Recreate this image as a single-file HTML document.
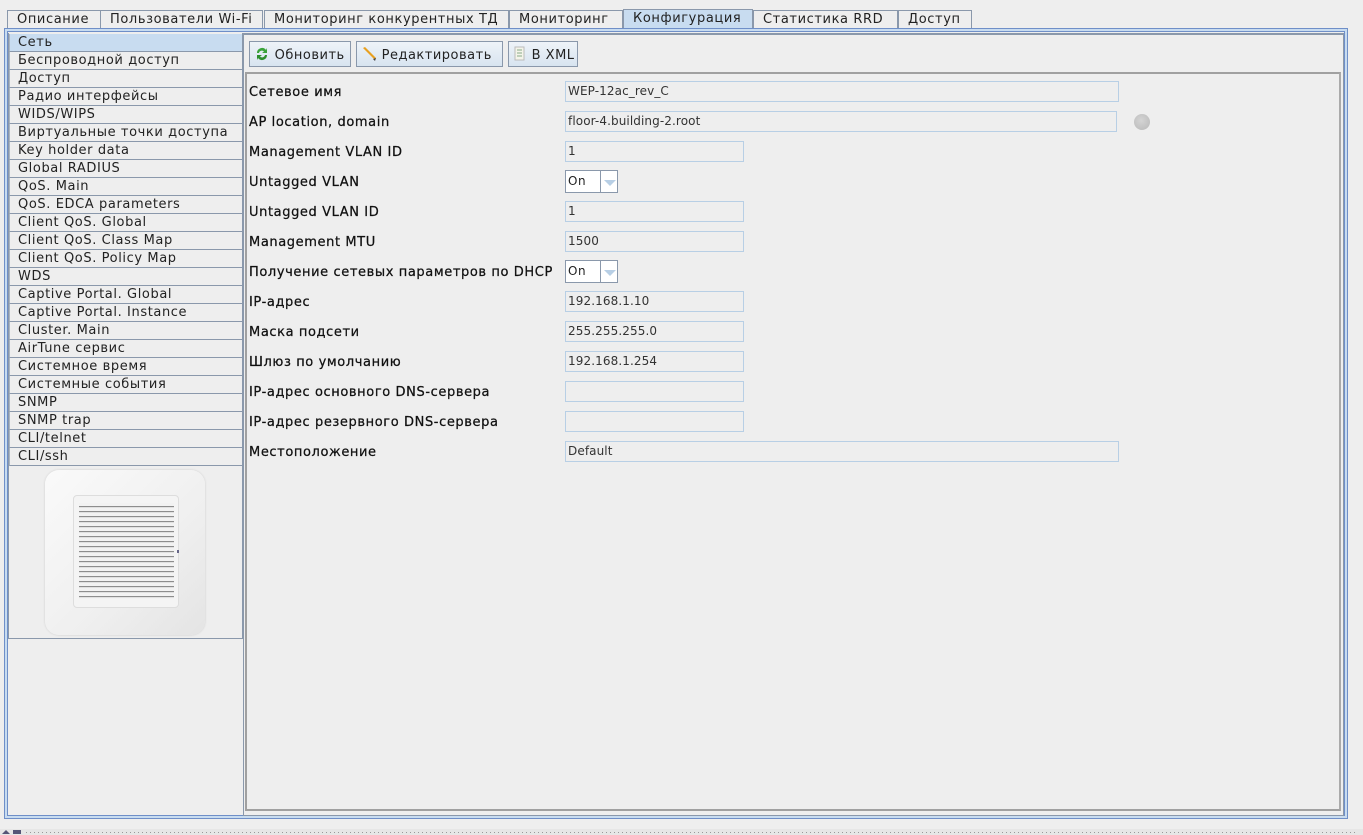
<!DOCTYPE html>
<html><head><meta charset="utf-8"><style>
*{box-sizing:border-box;margin:0;padding:0}
body{width:1363px;height:835px;background:#eeeeee;font-family:"DejaVu Sans","Liberation Sans",sans-serif;font-size:13px;color:#222;position:relative;overflow:hidden;letter-spacing:0.6px}
.abs{position:absolute}
.tab{position:absolute;top:10px;height:19px;border:1px solid #8a98ab;border-bottom:none;background:#eeeeee;padding:1px 0 0 9px;font-size:13px;color:#222;white-space:nowrap}
.tab.sel{background:#c8dcf0;top:9px;height:20px}
.li{position:absolute;left:9px;width:233px;height:18px;border-bottom:1px solid #8a98ab;border-left:1px solid #a8b4c4;padding:1px 0 0 8px;font-size:13px;white-space:nowrap}
.lbl{position:absolute;left:249px;font-size:13px;color:#111;letter-spacing:0.6px;-webkit-text-stroke:0.25px #111}
.fld{position:absolute;left:565px;height:21px;border:1px solid #b8cfe5;background:#eeeeee;font-size:12px;color:#333;padding:2px 0 0 2px;letter-spacing:0.1px}
.cmb{position:absolute;left:565px;width:53px;height:23px;border:1px solid #8a98ab;background:#fff}
.cmb span{position:absolute;left:2px;top:3px;font-size:12px}
.cmb i{position:absolute;left:34px;top:0;width:1px;height:21px;background:#8a98ab}
.cmb b{position:absolute;left:38px;top:9px;width:0;height:0;border-left:6px solid transparent;border-right:6px solid transparent;border-top:6px solid #b8cfe5}
.btn{position:absolute;top:41px;height:26px;border:1px solid #8a98ab;background:linear-gradient(#eef3f8,#d8e4f0);font-size:13px;padding:4px 0 0 4px;white-space:nowrap;letter-spacing:0.5px}
</style></head><body>
<div class="tab" style="left:7px;width:120px">Описание</div>
<div class="tab" style="left:100px;width:163px;border-left:1px solid #8a98ab">Пользователи Wi-Fi</div>
<div class="tab" style="left:264px;width:245px">Мониторинг конкурентных ТД</div>
<div class="tab" style="left:509px;width:114px">Мониторинг</div>
<div class="tab sel" style="left:623px;width:130px">Конфигурация</div>
<div class="tab" style="left:753px;width:145px">Статистика RRD</div>
<div class="tab" style="left:898px;width:74px">Доступ</div>
<div class="abs" style="left:4px;top:28px;width:1344px;height:791px;border:1px solid #6f8fc8;background:#c8dcf0"></div>
<div class="abs" style="left:7px;top:31px;width:1338px;height:785px;border:1px solid #6f8fc8;background:#eeeeee"></div>
<div class="abs" style="left:8px;top:33px;width:235px;height:606px;border:1px solid #8a98ab;border-top:none;background:#eeeeee"></div>
<div class="li" style="top:34px;background:#c8dcf0">Сеть</div>
<div class="li" style="top:52px">Беспроводной доступ</div>
<div class="li" style="top:70px">Доступ</div>
<div class="li" style="top:88px">Радио интерфейсы</div>
<div class="li" style="top:106px">WIDS/WIPS</div>
<div class="li" style="top:124px">Виртуальные точки доступа</div>
<div class="li" style="top:142px">Key holder data</div>
<div class="li" style="top:160px">Global RADIUS</div>
<div class="li" style="top:178px">QoS. Main</div>
<div class="li" style="top:196px">QoS. EDCA parameters</div>
<div class="li" style="top:214px">Client QoS. Global</div>
<div class="li" style="top:232px">Client QoS. Class Map</div>
<div class="li" style="top:250px">Client QoS. Policy Map</div>
<div class="li" style="top:268px">WDS</div>
<div class="li" style="top:286px">Captive Portal. Global</div>
<div class="li" style="top:304px">Captive Portal. Instance</div>
<div class="li" style="top:322px">Cluster. Main</div>
<div class="li" style="top:340px">AirTune сервис</div>
<div class="li" style="top:358px">Системное время</div>
<div class="li" style="top:376px">Системные события</div>
<div class="li" style="top:394px">SNMP</div>
<div class="li" style="top:412px">SNMP trap</div>
<div class="li" style="top:430px">CLI/telnet</div>
<div class="li" style="top:448px">CLI/ssh</div>
<div class="abs" style="left:45px;top:470px;width:160px;height:165px;border-radius:14px;background:linear-gradient(135deg,#fafafa,#efefef 60%,#e4e4e4);box-shadow:0 0 2px #ccc"></div>
<div class="abs" style="left:73px;top:495px;width:106px;height:113px;border-radius:4px;border:1px solid #ddd;background:#f4f4f4"></div>
<div class="abs" style="left:79px;top:503px;width:95px;height:96px;background:repeating-linear-gradient(#f2f2f2 0 3px,#8d8d8d 3px 4px,#e0e0e0 4px 5px)"></div>
<div class="abs" style="left:177px;top:550px;width:2px;height:3px;background:#668"></div>
<div class="abs" style="left:243px;top:33px;width:1101px;height:783px;border:1px solid #8a98ab;border-top:2px solid #8a98ab;background:#eeeeee"></div>
<div class="btn" style="left:249px;width:102px"><svg width="16" height="16" viewBox="0 0 16 16" style="vertical-align:-3px"><path d="M3 7a5 5 0 0 1 9-3l1-2v5h-5l2-1.5A3 3 0 0 0 5 7z" fill="#3aa33a"/><path d="M13 9a5 5 0 0 1-9 3l-1 2V9h5l-2 1.5A3 3 0 0 0 11 9z" fill="#2e8f2e"/></svg> Обновить</div>
<div class="btn" style="left:356px;width:147px"><svg width="16" height="16" viewBox="0 0 16 16" style="vertical-align:-3px"><path d="M2 2l2-1 11 11-1 2z" fill="#e8a020"/><path d="M12 13l2 2 1-3z" fill="#444"/></svg> Редактировать</div>
<div class="btn" style="left:508px;width:70px"><svg width="14" height="16" viewBox="0 0 14 16" style="vertical-align:-3px"><rect x="2" y="1" width="9" height="13" fill="#f4f4ea" stroke="#bbb"/><path d="M4 4h5M4 7h5M4 10h5" stroke="#8a8"/></svg> В XML</div>
<div class="abs" style="left:245px;top:72px;width:1096px;height:739px;border:2px solid #a0a0a0;border-right-color:#aaa;background:#eeeeee"></div>
<div class="lbl" style="top:85px">Сетевое имя</div><div class="fld" style="top:81px;width:554px">WEP-12ac_rev_C</div>
<div class="lbl" style="top:115px">AP location, domain</div><div class="fld" style="top:111px;width:552px">floor-4.building-2.root</div>
<div class="abs" style="left:1134px;top:114px;width:16px;height:16px;border-radius:50%;background:radial-gradient(circle at 45% 40%,#d4d4d4,#b8b8b8)"></div>
<div class="lbl" style="top:145px">Management VLAN ID</div><div class="fld" style="top:141px;width:179px">1</div>
<div class="lbl" style="top:175px">Untagged VLAN</div><div class="cmb" style="top:170px"><span>On</span><i></i><b></b></div>
<div class="lbl" style="top:205px">Untagged VLAN ID</div><div class="fld" style="top:201px;width:179px">1</div>
<div class="lbl" style="top:235px">Management MTU</div><div class="fld" style="top:231px;width:179px">1500</div>
<div class="lbl" style="top:265px">Получение сетевых параметров по DHCP</div><div class="cmb" style="top:260px"><span>On</span><i></i><b></b></div>
<div class="lbl" style="top:295px">IP-адрес</div><div class="fld" style="top:291px;width:179px">192.168.1.10</div>
<div class="lbl" style="top:325px">Маска подсети</div><div class="fld" style="top:321px;width:179px">255.255.255.0</div>
<div class="lbl" style="top:355px">Шлюз по умолчанию</div><div class="fld" style="top:351px;width:179px">192.168.1.254</div>
<div class="lbl" style="top:385px">IP-адрес основного DNS-сервера</div><div class="fld" style="top:381px;width:179px"></div>
<div class="lbl" style="top:415px">IP-адрес резервного DNS-сервера</div><div class="fld" style="top:411px;width:179px"></div>
<div class="lbl" style="top:445px">Местоположение</div><div class="fld" style="top:441px;width:554px">Default</div>
<div class="abs" style="left:0;top:829px;width:1363px;height:6px;background:#e6e6e6"></div>
<div class="abs" style="left:26px;top:832px;width:1330px;height:1px;background:repeating-linear-gradient(90deg,#999 0 1px,transparent 1px 4px)"></div>
<div class="abs" style="left:2px;top:830px;width:0;height:0;border-left:4px solid transparent;border-right:4px solid transparent;border-bottom:4px solid #557"></div>
<div class="abs" style="left:13px;top:830px;width:8px;height:4px;background:#557"></div>
</body></html>
